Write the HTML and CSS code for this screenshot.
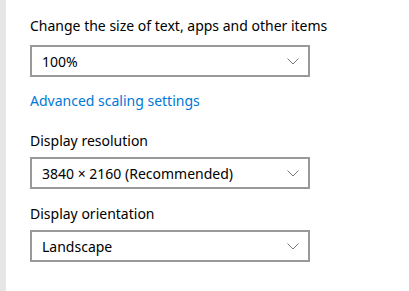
FILE: index.html
```html
<!DOCTYPE html>
<html lang="en">
<head>
    <meta charset="UTF-8">
    <meta name="viewport" content="width=device-width, initial-scale=1.0">
    <title>Display settings</title>
    <link rel="stylesheet" href="styles.css">
</head>
<body>
    <div class="sidebar"></div>
    <div class="content">
        <div class="setting">
            <label class="setting-label">Change the size of text, apps and other items</label>
            <div class="dropdown">
                <span>100%</span>
                <svg class="chevron" width="12" height="7" viewBox="0 0 12 7"><path d="M0.5 0.5 L6 6 L11.5 0.5" fill="none" stroke="#777" stroke-width="1"/></svg>
            </div>
        </div>

        <a class="link" href="#">Advanced scaling settings</a>

        <div class="setting">
            <label class="setting-label">Display resolution</label>
            <div class="dropdown">
                <span>3840 × 2160 (Recommended)</span>
                <svg class="chevron" width="12" height="7" viewBox="0 0 12 7"><path d="M0.5 0.5 L6 6 L11.5 0.5" fill="none" stroke="#777" stroke-width="1"/></svg>
            </div>
        </div>

        <div class="setting">
            <label class="setting-label">Display orientation</label>
            <div class="dropdown">
                <span>Landscape</span>
                <svg class="chevron" width="12" height="7" viewBox="0 0 12 7"><path d="M0.5 0.5 L6 6 L11.5 0.5" fill="none" stroke="#777" stroke-width="1"/></svg>
            </div>
        </div>
    </div>
</body>
</html>
```

FILE: styles.css
```css
body {
    margin: 0;
    height: 291px;
    display: flex;
    font-family: "Noto Sans", "Open Sans", sans-serif;
    font-size: 14px;
    color: #000;
    background: #fff;
}
.sidebar {
    width: 6px;
    background-color: #e6e6e6;
}
.content {
    padding: 16px 0 0 24px;
    display: flex;
    flex-direction: column;
    align-items: flex-start;
}
.setting {
    display: flex;
    flex-direction: column;
    gap: 9px;
}
.setting-label {
    line-height: 20px;
}
.dropdown {
    box-sizing: border-box;
    width: 280px;
    height: 32px;
    border: 2px solid #999;
    display: flex;
    align-items: center;
    justify-content: space-between;
    padding: 0 9px 0 10px;
}
.link {
    color: #0078d7;
    text-decoration: none;
    line-height: 20px;
    margin: 14px 0 20px;
}
.link + .setting,
.setting + .setting {
    gap: 6px;
}
.setting + .setting {
    margin-top: 15px;
}
```
